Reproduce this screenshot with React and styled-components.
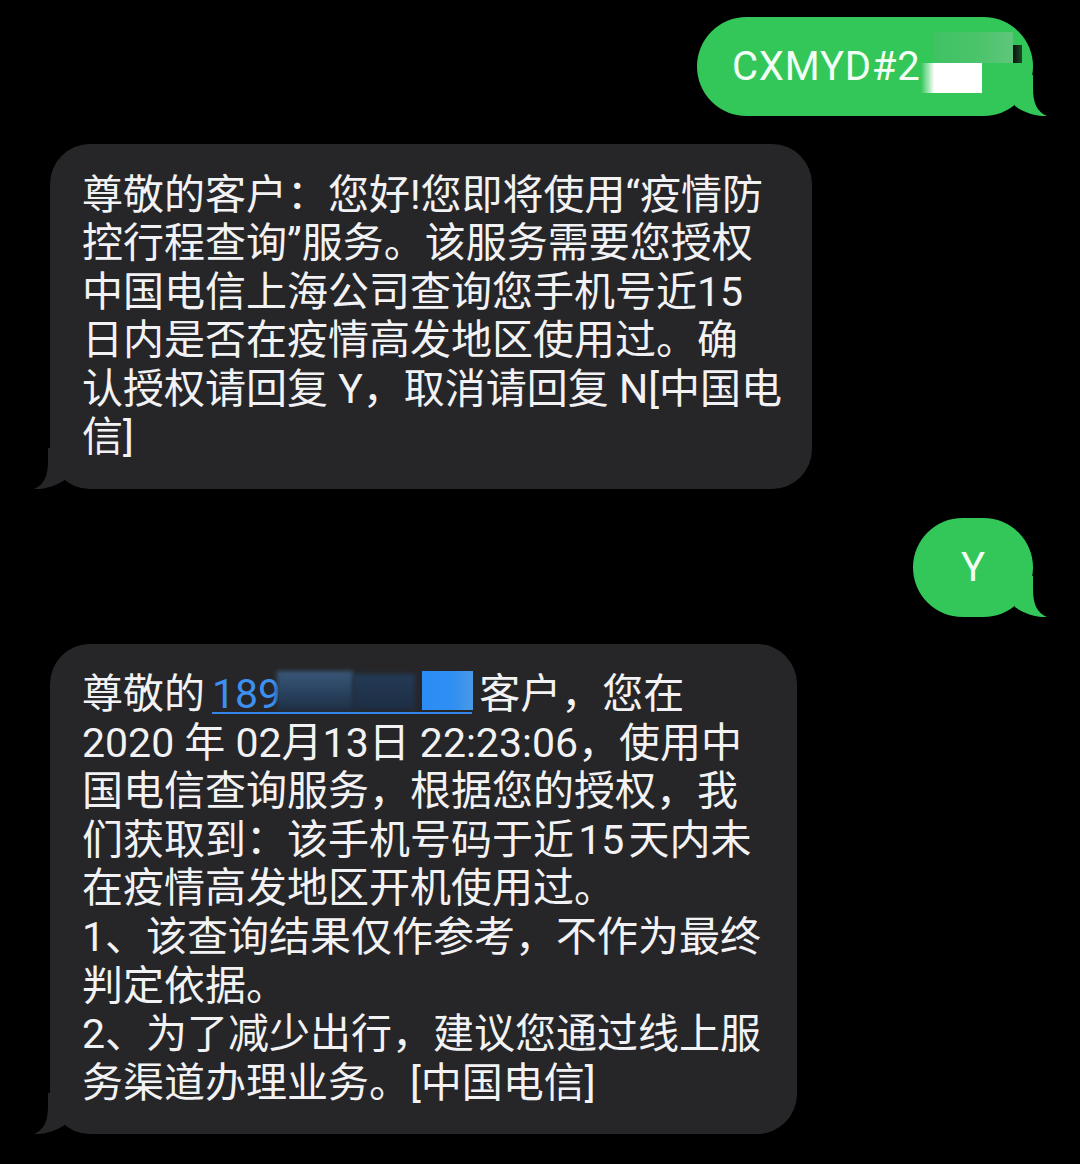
import React from "react";
import styled, { createGlobalStyle } from "styled-components";

const GlobalStyle = createGlobalStyle`
  html, body { margin: 0; padding: 0; background: #000; }
  #root { min-height: 1164px; }
  * { box-sizing: border-box; }
`;

const GREEN = "#33c75a";
const GRAY = "#262629";

const Page = styled.div`
  width: 1080px;
  min-height: 1164px;
  background: #000;
  display: flex;
  flex-direction: column;
  padding-top: 17px;
  font-family: Roboto, "Noto Sans CJK SC", sans-serif;
`;

const Row = styled.div`
  display: flex;
  justify-content: ${(p) => (p.$side === "right" ? "flex-end" : "flex-start")};
  margin-top: ${(p) => p.$gap || 0}px;
`;

const SentBubble = styled.div`
  position: relative;
  width: ${(p) => p.$w}px;
  height: 99px;
  margin-right: 47px;
  border-radius: 50px;
  background: ${GREEN};
  color: #f3fff5;
  font-size: 40px;
  letter-spacing: ${(p) => (p.$center ? 0 : 0.8)}px;
  display: flex;
  align-items: center;
  justify-content: ${(p) => (p.$center ? "center" : "flex-start")};
  padding-left: ${(p) => (p.$center ? 0 : 35)}px;
`;

const ReceivedBubble = styled.div`
  position: relative;
  width: ${(p) => p.$w}px;
  margin-left: 50px;
  border-radius: 40px;
  background: ${GRAY};
  color: #f2f2f4;
  font-size: 41px;
  line-height: 48.6px;
  padding: 26.5px 0 26.5px 32px;
`;

const Line = styled.span`
  display: block;
  white-space: nowrap;
`;

const TailSvg = styled.svg`
  position: absolute;
  bottom: 0;
  ${(p) => (p.$side === "right" ? "right: -15px;" : "left: -17px; transform: scaleX(-1);")}
  width: 50px;
  height: 45px;
  overflow: visible;
`;

const Tail = ({ side, color }) => (
  <TailSvg $side={side} viewBox="0 0 50 45">
    <path
      d="M35 4 L35 17 C35 32 39 41 49 45 C39 45.5 26 42 17 35 L12 4 Z"
      fill={color}
    />
  </TailSvg>
);

/* redaction patches in the first message */
const PatchGreen = styled.div`
  position: absolute;
  left: 236px;
  top: 15px;
  width: 80px;
  height: 31px;
  background: linear-gradient(90deg, #3fc262 0%, #4cc46c 60%, #5fc67c 100%);
`;

const PatchNotch = styled.div`
  position: absolute;
  left: 316px;
  top: 28px;
  width: 9px;
  height: 18px;
  background: linear-gradient(90deg, #0b140d, #1f4a2a);
`;

const PatchWhite = styled.div`
  position: absolute;
  left: 224px;
  top: 46px;
  width: 61px;
  height: 30px;
  background: linear-gradient(90deg, rgba(255,255,255,0) 0%, #ffffff 22%, #ffffff 100%);
`;

const Link = styled.span`
  position: relative;
  display: inline-block;
  color: #3d8ff0;
  padding-right: 191px;
  margin-left: 7px;
  margin-right: 7px;
  &::after {
    content: "";
    position: absolute;
    left: 0;
    right: 0;
    bottom: 5px;
    height: 2px;
    background: #3584e8;
  }
`;

const BlurDark = styled.span`
  position: absolute;
  left: 65px;
  top: 1px;
  width: 76px;
  height: 40px;
  background: linear-gradient(180deg, #3a5878 0%, #2c4664 45%, #1e2f45 100%);
  filter: blur(2px);
`;

const BlurMid = styled.span`
  position: absolute;
  left: 141px;
  top: 4px;
  width: 62px;
  height: 36px;
  background: linear-gradient(180deg, #243a55 0%, #1d2e44 100%);
  filter: blur(2px);
`;

const BlurBright = styled.span`
  position: absolute;
  left: 210px;
  top: 1px;
  width: 51px;
  height: 39px;
  background: linear-gradient(90deg, #2a8cf5 0%, #2f8ff2 60%, #4a9ae6 100%);
`;

export default function App() {
  return (
    <>
      <GlobalStyle />
      <Page>
        <Row $side="right">
          <SentBubble $w={336}>
            CXMYD#2
            <PatchGreen />
            <PatchNotch />
            <PatchWhite />
            <Tail side="right" color={GREEN} />
          </SentBubble>
        </Row>

        <Row $side="left" $gap={28}>
          <ReceivedBubble $w={762}>
            <Line>尊敬的客户：您好!您即将使用“疫情防</Line>
            <Line>控行程查询”服务。该服务需要您授权</Line>
            <Line>中国电信上海公司查询您手机号近15</Line>
            <Line>日内是否在疫情高发地区使用过。确</Line>
            <Line>认授权请回复 Y，取消请回复 N[中国电</Line>
            <Line>信]</Line>
            <Tail side="left" color={GRAY} />
          </ReceivedBubble>
        </Row>

        <Row $side="right" $gap={29}>
          <SentBubble $w={120} $center>
            Y
            <Tail side="right" color={GREEN} />
          </SentBubble>
        </Row>

        <Row $side="left" $gap={27}>
          <ReceivedBubble $w={747}>
            <Line>
              尊敬的<Link>189<BlurDark /><BlurMid /><BlurBright /></Link>客户，您在
            </Line>
            <Line>2020 年 02月13日 22:23:06，使用中</Line>
            <Line>国电信查询服务，根据您的授权，我</Line>
            <Line>们获取到：该手机号码于近{"\u200A"}15{"\u200A"}天内未</Line>
            <Line>在疫情高发地区开机使用过。</Line>
            <Line>1、该查询结果仅作参考，不作为最终</Line>
            <Line>判定依据。</Line>
            <Line>2、为了减少出行，建议您通过线上服</Line>
            <Line>务渠道办理业务。[中国电信]</Line>
            <Tail side="left" color={GRAY} />
          </ReceivedBubble>
        </Row>
      </Page>
    </>
  );
}
